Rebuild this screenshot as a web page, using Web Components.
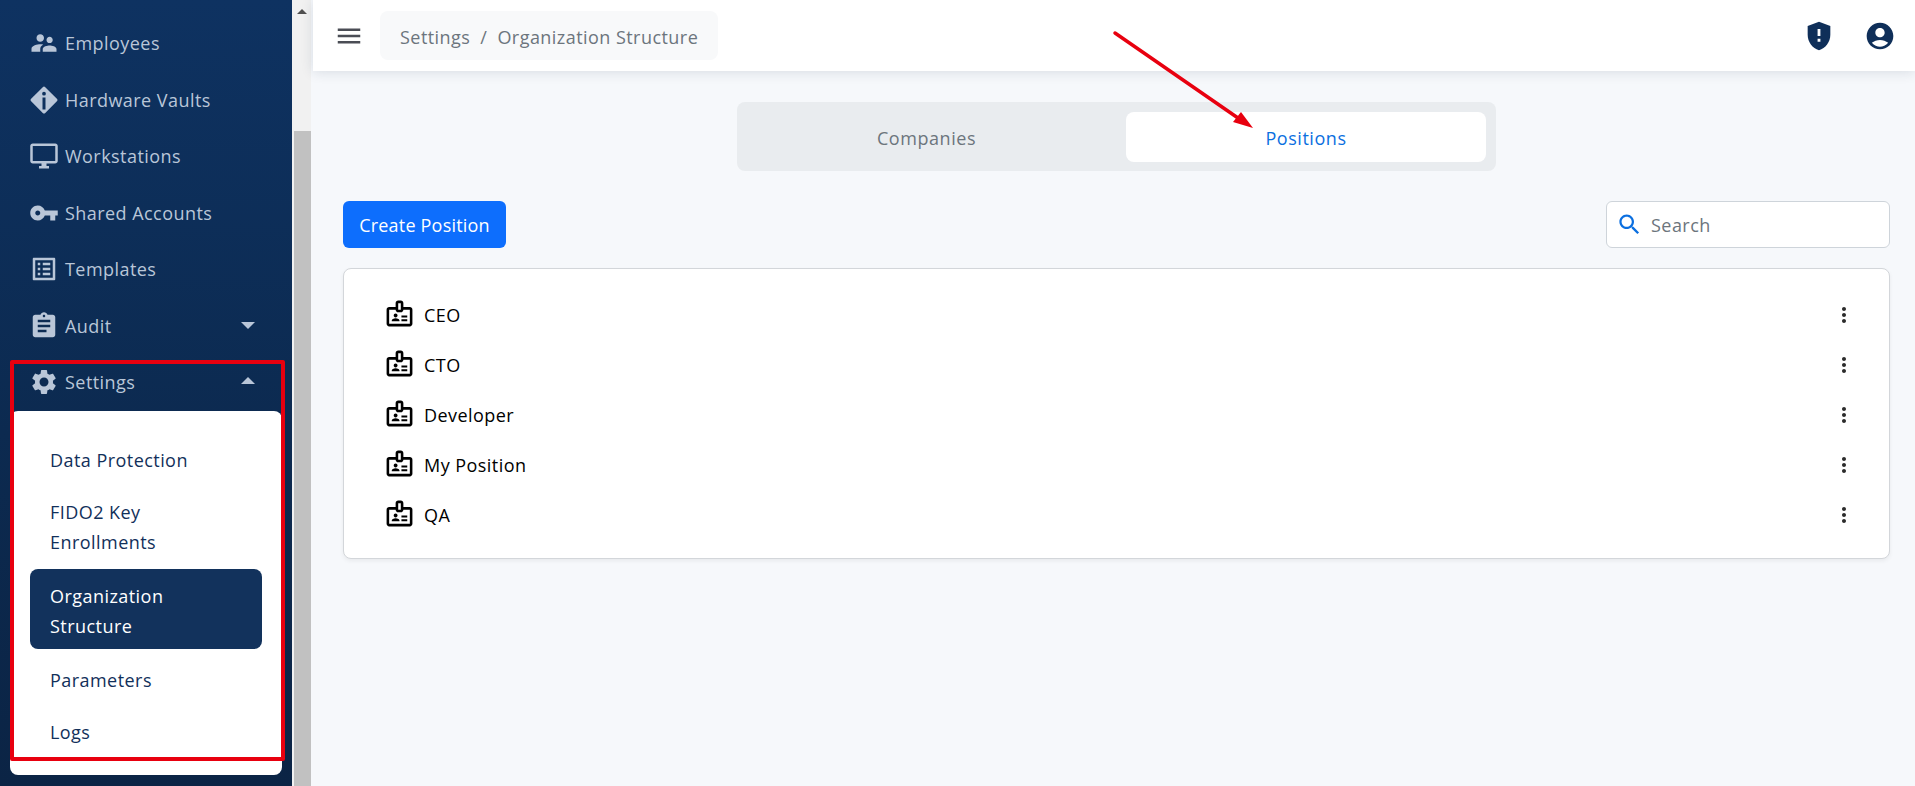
<!DOCTYPE html>
<html lang="en">
<head>
<meta charset="utf-8">
<title>Organization Structure</title>
<style>
	html, body { height: 100%; }
	body {
		margin: 0;
		height: 786px;
		overflow: hidden;
		font: 18px/30px "Open Sans", "Noto Sans", sans-serif;
		letter-spacing: 0.45px;
	}
</style>
</head>
<body>
<app-shell>
	<side-bar slot="side">
		<nav-item icon="dashboard"></nav-item>
		<nav-item icon="group">Employees</nav-item>
		<nav-item icon="vault">Hardware Vaults</nav-item>
		<nav-item icon="desktop">Workstations</nav-item>
		<nav-item icon="key">Shared Accounts</nav-item>
		<nav-item icon="list">Templates</nav-item>
		<nav-item icon="assignment" caret="down">Audit</nav-item>
		<nav-item icon="settings" caret="up">Settings</nav-item>
		<sub-nav>
			<sub-nav-item>Data Protection</sub-nav-item>
			<sub-nav-item>FIDO2 Key<br>Enrollments</sub-nav-item>
			<sub-nav-item active>Organization<br>Structure</sub-nav-item>
			<sub-nav-item>Parameters</sub-nav-item>
			<sub-nav-item>Logs</sub-nav-item>
		</sub-nav>
	</side-bar>
	<fake-scrollbar slot="scroll"></fake-scrollbar>
	<top-bar slot="top">
		<span>Settings</span><span class="sep">/</span><span>Organization Structure</span>
	</top-bar>
	<seg-tabs slot="main" active="Positions"></seg-tabs>
	<list-toolbar slot="main" label="Create Position"></list-toolbar>
	<position-list slot="main">
		<position-row>CEO</position-row>
		<position-row>CTO</position-row>
		<position-row>Developer</position-row>
		<position-row>My Position</position-row>
		<position-row>QA</position-row>
	</position-list>
	<red-marks slot="over"></red-marks>
</app-shell>

<script>
const ICONS = {
	dashboard: "M3 13h8V3H3v10zm0 8h8v-6H3v6zm10 0h8V11h-8v10zm0-18v6h8V3h-8z",
	group: "M16.5 12c1.38 0 2.49-1.12 2.49-2.5S17.88 7 16.5 7C15.12 7 14 8.12 14 9.5s1.12 2.5 2.5 2.5zM9 11c1.66 0 3-1.34 3-3S10.66 5 9 5 6 6.34 6 8s1.34 3 3 3zm7.5 3c-1.83 0-5.5.92-5.5 2.75V19h11v-2.25c0-1.83-3.67-2.75-5.5-2.75zM9 13c-2.33 0-7 1.17-7 3.5V19h7v-2.25c0-.85.33-2.34 2.37-3.47C10.5 13.1 9.66 13 9 13z",
	vault: "M11 1.7c.6-.6 1.4-.6 2 0l9.3 9.3c.6.6.6 1.4 0 2L13 22.3c-.6.6-1.4.6-2 0L1.7 13c-.6-.6-.6-1.4 0-2zM12 5.4a1.5 1.5 0 1 0 0 3 1.5 1.5 0 0 0 0-3zM10.8 10v9.5h2.4V10z",
	desktop: "M21 2H3c-1.1 0-2 .9-2 2v12c0 1.1.9 2 2 2h7v2H8v2h8v-2h-2v-2h7c1.1 0 2-.9 2-2V4c0-1.1-.9-2-2-2zm0 14H3V4h18v12z",
	key: "M12.65 10C11.83 7.67 9.61 6 7 6c-3.31 0-6 2.69-6 6s2.69 6 6 6c2.61 0 4.83-1.67 5.65-4H17v4h4v-4h2v-4H12.65zM7 14c-1.1 0-2-.9-2-2s.9-2 2-2 2 .9 2 2-.9 2-2 2z",
	list: "M19 5v14H5V5h14m1.1-2H3.9c-.5 0-.9.4-.9.9v16.2c0 .4.4.9.9.9h16.2c.4 0 .9-.5.9-.9V3.9c0-.5-.5-.9-.9-.9zM11 7h6v2h-6V7zm0 4h6v2h-6v-2zm0 4h6v2h-6zM7 7h2v2H7zm0 4h2v2H7zm0 4h2v2H7z",
	assignment: "M19 3h-4.18C14.4 1.84 13.3 1 12 1c-1.3 0-2.4.84-2.82 2H5c-1.1 0-2 .9-2 2v14c0 1.1.9 2 2 2h14c1.1 0 2-.9 2-2V5c0-1.1-.9-2-2-2zm-7 0c.55 0 1 .45 1 1s-.45 1-1 1-1-.45-1-1 .45-1 1-1zm2 14H7v-2h7v2zm3-4H7v-2h10v2zm0-4H7V7h10v2z",
	settings: "M19.14 12.94c.04-.3.06-.61.06-.94 0-.32-.02-.64-.07-.94l2.03-1.58c.18-.14.23-.41.12-.61l-1.92-3.32c-.12-.22-.37-.29-.59-.22l-2.39.96c-.5-.38-1.03-.7-1.62-.94l-.36-2.54c-.04-.24-.24-.41-.48-.41h-3.84c-.24 0-.43.17-.47.41l-.36 2.54c-.59.24-1.13.57-1.62.94l-2.39-.96c-.22-.08-.47 0-.59.22L2.74 8.87c-.12.21-.08.47.12.61l2.03 1.58c-.05.3-.09.63-.09.94s.02.64.07.94l-2.03 1.58c-.18.14-.23.41-.12.61l1.92 3.32c.12.22.37.29.59.22l2.39-.96c.5.38 1.03.7 1.62.94l.36 2.54c.05.24.24.41.48.41h3.84c.24 0 .44-.17.47-.41l.36-2.54c.59-.24 1.13-.56 1.62-.94l2.39.96c.22.08.47 0 .59-.22l1.92-3.32c.12-.22.07-.47-.12-.61l-2.01-1.58zM12 15.6c-1.98 0-3.6-1.62-3.6-3.6s1.62-3.6 3.6-3.6 3.6 1.62 3.6 3.6-1.62 3.6-3.6 3.6z",
	menu: "M3 18h18v-2H3v2zm0-5h18v-2H3v2zm0-7v2h18V6H3z",
	search: "M15.5 14h-.79l-.28-.27C15.41 12.59 16 11.11 16 9.5 16 5.91 13.09 3 9.5 3S3 5.91 3 9.5 5.91 16 9.5 16c1.61 0 3.09-.59 4.23-1.57l.27.28v.79l5 4.99L20.49 19l-4.99-5zm-6 0C7.01 14 5 11.99 5 9.5S7.01 5 9.5 5 14 7.01 14 9.5 11.99 14 9.5 14z",
	shield: "M12 2 4 5v6.09c0 5.05 3.41 9.76 8 10.91 4.59-1.15 8-5.86 8-10.91V5l-8-3zm1 14h-2v-2h2v2zm0-4h-2V7h2v5z",
	account: "M12 2C6.48 2 2 6.48 2 12s4.48 10 10 10 10-4.48 10-10S17.52 2 12 2zm0 4c1.93 0 3.5 1.57 3.5 3.5S13.93 13 12 13s-3.5-1.57-3.5-3.5S10.07 6 12 6zm0 14c-2.03 0-4.43-.82-6.14-2.88C7.55 15.8 9.68 15 12 15s4.45.8 6.14 2.12C16.43 19.18 14.03 20 12 20z",
	badge: "M20 7h-5V4c0-1.1-.9-2-2-2h-2c-1.1 0-2 .9-2 2v3H4c-1.1 0-2 .9-2 2v11c0 1.1.9 2 2 2h16c1.1 0 2-.9 2-2V9c0-1.1-.9-2-2-2zM11 4h2v5h-2V4zm9 16H4V9h5c0 1.1.9 2 2 2h2c1.1 0 2-.9 2-2h5v11zM9 15c.83 0 1.5-.67 1.5-1.5S9.83 12 9 12s-1.5.67-1.5 1.5S8.17 15 9 15zm2.08 1.18C10.44 15.9 9.74 15.75 9 15.75s-1.44.15-2.08.43c-.56.24-.92.78-.92 1.39V18h6v-.43c0-.61-.36-1.15-.92-1.39zM13.5 13.5H18V15h-4.5zM13.5 16.5H18V18h-4.5z",
	more: "M12 8c1.1 0 2-.9 2-2s-.9-2-2-2-2 .9-2 2 .9 2 2 2zm0 2c-1.1 0-2 .9-2 2s.9 2 2 2 2-.9 2-2-.9-2-2-2zm0 6c-1.1 0-2 .9-2 2s.9 2 2 2 2-.9 2-2-.9-2-2-2z"
};

class SvgIcon extends HTMLElement {
	connectedCallback() {
		const size = this.getAttribute("size") || 24;
		this.attachShadow({ mode: "open" });
		this.shadowRoot.innerHTML = `
			<style>
				:host { display: block; flex: none; width: ${size}px; height: ${size}px; color: inherit; }
				svg { display: block; width: 100%; height: 100%; fill: currentColor; }
			</style>
			<svg viewBox="0 0 24 24"><path fill-rule="evenodd" d="${ICONS[this.getAttribute("name")]}"></path></svg>
		`;
	}
}

class AppShell extends HTMLElement {
	constructor() {
		super();
		this.attachShadow({ mode: "open" });
		this.shadowRoot.innerHTML = `
			<style>
				:host { display: grid; grid-template-columns: 292px 21px 1fr; height: 786px; position: relative; overflow: hidden; background: #f6f8fb; }
				.page { display: flex; flex-direction: column; min-width: 0; }
				.content { display: flex; flex-direction: column; padding: 31px 25px 0 30px; }
			</style>
			<slot name="side"></slot>
			<slot name="scroll"></slot>
			<div class="page">
				<slot name="top"></slot>
				<div class="content"><slot name="main"></slot></div>
			</div>
			<slot name="over"></slot>
		`;
	}
}

class SideBar extends HTMLElement {
	constructor() {
		super();
		this.attachShadow({ mode: "open" });
		this.shadowRoot.innerHTML = `
			<style>
				:host { display: block; height: 786px; overflow: hidden; background: linear-gradient(180deg, #0e3261 0%, #0c2a50 55%, #0b2445 100%); }
				.inner { margin-top: -41.5px; }
			</style>
			<div class="inner"><slot></slot></div>
		`;
	}
}

class NavItem extends HTMLElement {
	connectedCallback() {
		const caret = this.getAttribute("caret");
		this.attachShadow({ mode: "open" });
		this.shadowRoot.innerHTML = `
			<style>
				:host { display: flex; align-items: center; gap: 6px; height: 56.5px; padding: 0 37px 0 29px; color: #b9c6d8; }
				.label { flex: 1; }
				.caret { width: 0; height: 0; border-left: 7px solid transparent; border-right: 7px solid transparent; }
				.down { border-top: 7px solid #b9c6d8; }
				.up { border-bottom: 7px solid #b9c6d8; margin-top: -4px; }
			</style>
			<svg-icon name="${this.getAttribute("icon")}" size="30"></svg-icon>
			<span class="label"><slot></slot></span>
			${caret ? `<span class="caret ${caret}"></span>` : ""}
		`;
	}
}

class SubNav extends HTMLElement {
	constructor() {
		super();
		this.attachShadow({ mode: "open" });
		this.shadowRoot.innerHTML = `
			<style>
				:host { display: block; margin: .5px 10px 0; padding: 23px 20px 17px; background: #fff; border-radius: 8px; color: #12305a; }
			</style>
			<slot></slot>
		`;
	}
}

class SubNavItem extends HTMLElement {
	constructor() {
		super();
		this.attachShadow({ mode: "open" });
		this.shadowRoot.innerHTML = `
			<style>
				:host { display: block; padding: 11px 20px; border-radius: 8px; }
				:host([active]) { margin: 1px 0 5px; padding: 12px 20px 8px; background: #12325c; color: #fff; }
			</style>
			<slot></slot>
		`;
	}
}

class FakeScrollbar extends HTMLElement {
	constructor() {
		super();
		this.attachShadow({ mode: "open" });
		this.shadowRoot.innerHTML = `
			<style>
				:host { display: flex; flex-direction: column; height: 786px; background: #f1f1f1; border-right: 2px solid #f6f8fb; box-sizing: border-box; padding-left: 2px; }
				.arrow { flex: none; height: 131px; padding-top: 9px; box-sizing: border-box; }
				.arrow i { display: block; width: 0; height: 0; margin-left: 3px; border-left: 5px solid transparent; border-right: 5px solid transparent; border-bottom: 5px solid #505050; }
				.thumb { flex: 1; background: #c1c1c1; }
			</style>
			<div class="arrow"><i></i></div>
			<div class="thumb"></div>
		`;
	}
}

class TopBar extends HTMLElement {
	constructor() {
		super();
		this.attachShadow({ mode: "open" });
		this.shadowRoot.innerHTML = `
			<style>
				:host { display: flex; align-items: center; height: 71px; box-sizing: border-box; padding: 0 19px 0 21px; background: #fff; box-shadow: 0 1px 12px rgba(30, 50, 80, .14); position: relative; }
				.menu { color: #4a4d55; margin-right: 16px; }
				.crumb { display: flex; height: 49px; box-sizing: border-box; align-items: center; padding: 2px 20px 0; background: #f8f9fa; border-radius: 8px; color: #6c757d; }
				.crumb ::slotted(.sep) { margin: 0 10px; }
				.right { margin-left: auto; display: flex; align-items: center; gap: 28px; color: #0f2f59; }
			</style>
			<svg-icon class="menu" name="menu" size="30"></svg-icon>
			<div class="crumb"><slot></slot></div>
			<div class="right">
				<svg-icon name="shield" size="34"></svg-icon>
				<svg-icon name="account" size="32"></svg-icon>
			</div>
		`;
	}
}

class SegTabs extends HTMLElement {
	connectedCallback() {
		this.attachShadow({ mode: "open" });
		this.shadowRoot.innerHTML = `
			<style>
				:host { display: grid; grid-template-columns: 359px 360px; column-gap: 20px; align-self: center; width: 759px; height: 69px; box-sizing: border-box; padding: 10px 10px 9px 10px; background: #e9ecef; border-radius: 8px; letter-spacing: .55px; }
				div { display: flex; align-items: center; justify-content: center; box-sizing: border-box; padding-top: 2px; border-radius: 8px; color: #6c757d; }
				.on { background: #fff; color: #0b6fe0; }
			</style>
			<div>Companies</div>
			<div class="on">Positions</div>
		`;
	}
}

class ListToolbar extends HTMLElement {
	connectedCallback() {
		this.attachShadow({ mode: "open" });
		this.shadowRoot.innerHTML = `
			<style>
				:host { display: flex; justify-content: space-between; margin-top: 30px; height: 47px; }
				button { width: 163px; font: inherit; letter-spacing: .2px; color: #fff; background: #0d6efd; border: 0; border-radius: 6px; padding: 1px 0 0; }
				.search { display: flex; align-items: center; gap: 8px; width: 284px; box-sizing: border-box; padding-left: 9px; background: #fff; border: 1px solid #ced4da; border-radius: 6px; color: #6c757d; }
				.search span { padding-top: 1px; }
				svg-icon { color: #0b6fe0; }
			</style>
			<button type="button">${this.getAttribute("label")}</button>
			<div class="search"><svg-icon name="search" size="27"></svg-icon><span>Search</span></div>
		`;
	}
}

class PositionList extends HTMLElement {
	constructor() {
		super();
		this.attachShadow({ mode: "open" });
		this.shadowRoot.innerHTML = `
			<style>
				:host { display: block; margin-top: 20px; box-sizing: border-box; height: 291px; padding: 21px 33px 0 40px; background: #fff; border: 1px solid #d3d6da; border-radius: 8px; box-shadow: 0 2px 4px rgba(0, 0, 0, .06); color: #000; }
			</style>
			<slot></slot>
		`;
	}
}

class PositionRow extends HTMLElement {
	constructor() {
		super();
		this.attachShadow({ mode: "open" });
		this.shadowRoot.innerHTML = `
			<style>
				:host { display: flex; align-items: center; gap: 9px; height: 50px; }
				span { flex: 1; }
				.badge { margin-top: -3px; }
				.more { color: #2b2b2b; }
			</style>
			<svg-icon class="badge" name="badge" size="31"></svg-icon>
			<span><slot></slot></span>
			<svg-icon class="more" name="more" size="24"></svg-icon>
		`;
	}
}

// the red box and arrow are annotations drawn over the screenshot
class RedMarks extends HTMLElement {
	constructor() {
		super();
		this.attachShadow({ mode: "open" });
		this.shadowRoot.innerHTML = `
			<style>
				:host { position: absolute; inset: 0; pointer-events: none; }
				.box { position: absolute; left: 10px; top: 360px; width: 275px; height: 401px; box-sizing: border-box; border: 4px solid #e8000f; border-radius: 2px; }
				svg { position: absolute; left: 0; top: 0; }
			</style>
			<div class="box"></div>
			<svg width="1915" height="786">
				<line x1="1115" y1="33" x2="1238" y2="118" stroke="#e8000f" stroke-width="3.5" stroke-linecap="round"></line>
				<polygon points="1253,128 1233,122 1241,112" fill="#e8000f"></polygon>
			</svg>
		`;
	}
}

customElements.define("svg-icon", SvgIcon);
customElements.define("app-shell", AppShell);
customElements.define("side-bar", SideBar);
customElements.define("nav-item", NavItem);
customElements.define("sub-nav", SubNav);
customElements.define("sub-nav-item", SubNavItem);
customElements.define("fake-scrollbar", FakeScrollbar);
customElements.define("top-bar", TopBar);
customElements.define("seg-tabs", SegTabs);
customElements.define("list-toolbar", ListToolbar);
customElements.define("position-list", PositionList);
customElements.define("position-row", PositionRow);
customElements.define("red-marks", RedMarks);
</script>
</body>
</html>
